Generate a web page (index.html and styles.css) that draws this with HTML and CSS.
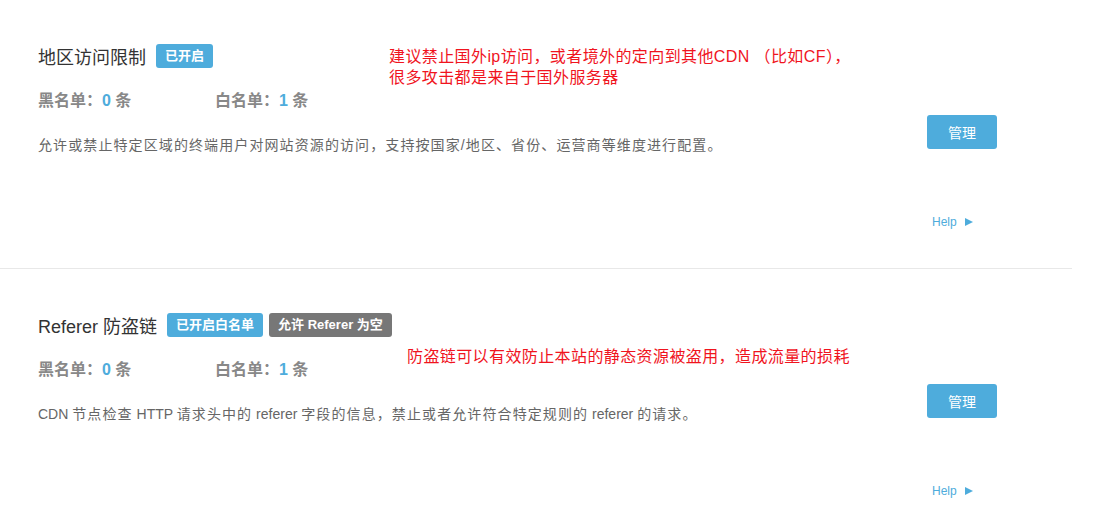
FILE: index.html
```html
<!DOCTYPE html>
<html lang="zh-CN">
    <head>
        <meta charset="UTF-8"/>
        <meta name="viewport" content="width=device-width, initial-scale=1.0"/>
        <title>访问控制</title>
        <link rel="stylesheet" href="styles.css">
    </head>
    <body>
        <div class="list">
            <div class="rule">
                <div class="rule-info">
                    <div class="rule-title">
                        <span class="name">地区访问限制</span>
                        <span class="badge">已开启</span>
                    </div>
                    <div class="stats">
                        <span class="stat">黑名单：<em>0</em> 条</span>
                        <span class="stat">白名单：<em>1</em> 条</span>
                    </div>
                    <p class="desc">允许或禁止特定区域的终端用户对网站资源的访问，支持按国家/地区、省份、运营商等维度进行配置。</p>
                </div>
                <div class="rule-action">
                    <button class="btn">管理</button>
                    <a class="help" href="#">Help <span class="arrow"></span></a>
                </div>
                <div class="note note-1">建议禁止国外ip访问，或者境外的定向到其他CDN （比如CF），<br>很多攻击都是来自于国外服务器</div>
            </div>
            <div class="rule">
                <div class="rule-info">
                    <div class="rule-title">
                        <span class="name">Referer 防盗链</span>
                        <span class="badge">已开启白名单</span>
                        <span class="badge badge-grey">允许 Referer 为空</span>
                    </div>
                    <div class="stats">
                        <span class="stat">黑名单：<em>0</em> 条</span>
                        <span class="stat">白名单：<em>1</em> 条</span>
                    </div>
                    <p class="desc"><span class="en">CDN </span>节点检查<span class="en"> HTTP </span>请求头中的<span class="en"> referer </span>字段的信息，禁止或者允许符合特定规则的<span class="en"> referer </span>的请求。</p>
                </div>
                <div class="rule-action">
                    <button class="btn">管理</button>
                    <a class="help" href="#">Help <span class="arrow"></span></a>
                </div>
                <div class="note note-2">防盗链可以有效防止本站的静态资源被盗用，造成流量的损耗</div>
            </div>
        </div>
    </body>
</html>
```

FILE: styles.css
```css
body {
    margin: 0;
    background: #fff;
    font-family: "Liberation Sans", "Noto Sans CJK SC", sans-serif;
    color: #333;
}

.list {
    width: 1072px;
}

.rule {
    position: relative;
    display: flex;
    height: 269px;
    padding: 44px 75px 0 38px;
    box-sizing: border-box;
    border-bottom: 1px solid #e8e8e8;
}

.rule-info {
    flex: 1;
}

.rule-title {
    display: flex;
    align-items: center;
    height: 24px;
}

.rule-title .name {
    font-size: 18px;
    color: #333;
    margin-right: 10px;
}

.badge {
    display: inline-block;
    height: 24px;
    line-height: 24px;
    padding: 0 9px;
    margin-right: 6px;
    border-radius: 3px;
    background: #4eacdc;
    color: #fff;
    font-size: 13px;
    font-weight: 700;
}

.badge-grey {
    background: #777;
}

.stats {
    display: flex;
    margin-top: 21px;
    height: 24px;
    line-height: 24px;
    font-size: 16px;
    font-weight: 700;
    color: #888;
}

.stat {
    width: 177px;
}

.stat em {
    font-style: normal;
    color: #4eacdc;
}

.desc {
    margin: 22px 0 0;
    font-size: 14px;
    letter-spacing: 1.1px;
    line-height: 20px;
    color: #666;
}

.desc .en {
    letter-spacing: 0;
}

.rule-action {
    width: 70px;
    padding-top: 71px;
}

.btn {
    display: block;
    width: 70px;
    height: 34px;
    border: 0;
    border-radius: 3px;
    background: #4eacdc;
    color: #fff;
    font-family: inherit;
    font-size: 14px;
}

.help {
    display: flex;
    align-items: center;
    margin: 65px 0 0 5px;
    font-size: 12px;
    line-height: 16px;
    color: #4eacdc;
    text-decoration: none;
}

.help .arrow {
    width: 0;
    height: 0;
    margin-left: 8px;
    border-top: 4px solid transparent;
    border-bottom: 4px solid transparent;
    border-left: 8px solid #4eacdc;
}

.note {
    position: absolute;
    font-size: 16px;
    letter-spacing: 0.4px;
    line-height: 21px;
    color: #f0141e;
}

.note-1 {
    left: 389px;
    top: 46px;
}

.note-2 {
    left: 407px;
    top: 77px;
}
```
